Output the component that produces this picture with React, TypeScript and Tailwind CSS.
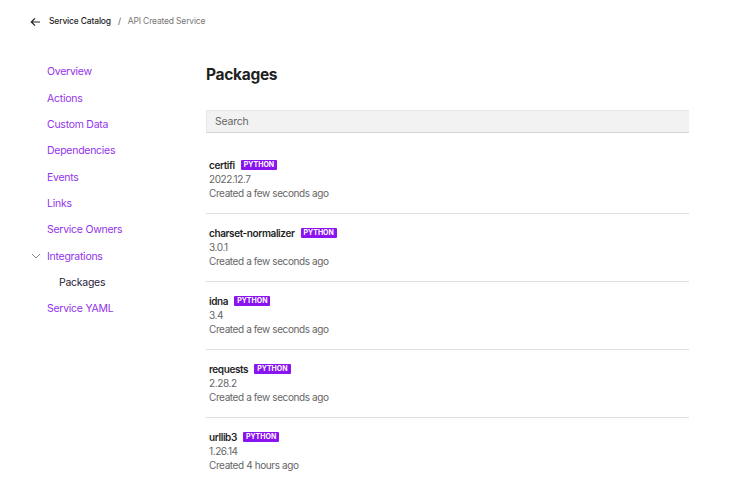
import React from "react";

const nav = [
  "Overview",
  "Actions",
  "Custom Data",
  "Dependencies",
  "Events",
  "Links",
  "Service Owners",
];

const pkgs = [
  { name: "certifi", version: "2022.12.7", created: "Created a few seconds ago" },
  { name: "charset-normalizer", version: "3.0.1", created: "Created a few seconds ago" },
  { name: "idna", version: "3.4", created: "Created a few seconds ago" },
  { name: "requests", version: "2.28.2", created: "Created a few seconds ago" },
  { name: "urllib3", version: "1.26.14", created: "Created 4 hours ago" },
];

export default function App() {
  return (
    <div className="w-[747px] h-[503px] bg-white font-['Inter',sans-serif] overflow-hidden">
      <div className="h-[41px] pt-[2px] flex items-center pl-[30px] text-[8.5px] tracking-[-0.02em]">
        <svg width="11" height="10" viewBox="0 0 11 10" className="mr-[8px]">
          <path d="M10 5H1.5M5 1.3L1.3 5L5 8.7" stroke="#222" strokeWidth="1.2" fill="none" />
        </svg>
        <span className="text-[#1f1f1f] font-medium">Service Catalog</span>
        <span className="text-[#555] mx-[7px]">/</span>
        <span className="text-[#777]">API Created Service</span>
      </div>
      <div className="flex">
        <div className="w-[206px] shrink-0 pt-[18px] text-[10.5px] tracking-[-0.025em]">
          {nav.map((n) => (
            <div key={n} className="h-[26.33px] flex items-center pl-[47px] text-[#9333ea]">
              {n}
            </div>
          ))}
          <div className="h-[26.33px] flex items-center pl-[31px] text-[#9333ea]">
            <svg width="10" height="6" viewBox="0 0 10 6" className="mr-[6px]">
              <path d="M1 1L5 5L9 1" stroke="#888" strokeWidth="1" fill="none" />
            </svg>
            Integrations
          </div>
          <div className="h-[26.33px] flex items-center pl-[59px] text-[#2a1a3a]">Packages</div>
          <div className="h-[26.33px] flex items-center pl-[47px] text-[#9333ea]">Service YAML</div>
        </div>
        <div className="w-[483px] pt-[22px]">
          <h1 className="text-[15.5px] font-bold text-[#1f1f1f] leading-[24px] tracking-[-0.02em]">Packages</h1>
          <div className="mt-[23px] h-[23px] bg-[#f2f2f2] border-t border-t-[#e6e6e6] border-b border-b-[#d4d4d4] border-l border-l-[#e6e6e6] flex items-center pl-[8px] text-[10.5px] text-[#666] tracking-[-0.02em]">
            Search
          </div>
          <div className="mt-[13px]">
            {pkgs.map((p, i) => (
              <div
                key={p.name}
                className={`pl-[3px] pt-[12px] pb-[12px] tracking-[-0.025em] ${i < pkgs.length - 1 ? "border-b border-[#e0e0e0]" : ""}`}
              >
                <div className="h-[14px] flex items-center gap-[6px]">
                  <span className="text-[10px] font-semibold text-[#1f1f1f]">{p.name}</span>
                  <span className="bg-[#8a14ef] text-white text-[7px] font-bold px-[3px] h-[10px] leading-[10px] rounded-[1px] tracking-normal">
                    PYTHON
                  </span>
                </div>
                <div className="h-[14.5px] flex items-center text-[10px] text-[#666]">{p.version}</div>
                <div className="h-[14.5px] flex items-center text-[10px] text-[#666]">{p.created}</div>
              </div>
            ))}
          </div>
        </div>
      </div>
    </div>
  );
}
